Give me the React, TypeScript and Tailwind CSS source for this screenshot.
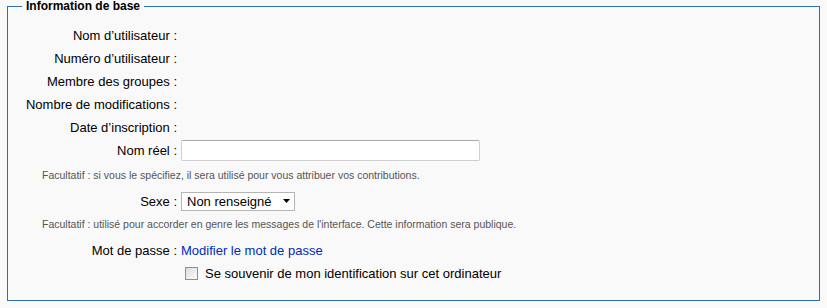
import { ChangeEvent, useState } from "react";

const infoRows = [
  "Nom d’utilisateur",
  "Numéro d’utilisateur",
  "Membre des groupes",
  "Nombre de modifications",
  "Date d’inscription",
];

function Label({ text }: { text: string }) {
  return <div className="w-[169px] shrink-0 text-right">{text} :</div>;
}

export default function App() {
  const [realName, setRealName] = useState("");
  const [gender, setGender] = useState("unknown");
  const [remember, setRemember] = useState(false);

  return (
    <div className="w-[827px] h-[308px] bg-[#f9f9f9] pl-[7px] font-['Liberation_Sans',Arial,sans-serif] text-[13px] text-black">
      <fieldset className="w-[813px] m-0 p-0 pb-[17px] border border-[#2f6fab]">
        <legend className="ml-[14px] px-1 text-[12px] leading-[13px] font-bold">
          Information de base
        </legend>

        <div className="pt-[11px] flex flex-col">
          {infoRows.map((row) => (
            <div key={row} className="flex items-center h-[23px]">
              <Label text={row} />
            </div>
          ))}

          <div className="flex items-center h-[23px]">
            <Label text="Nom réel" />
            <input
              type="text"
              value={realName}
              onChange={(e: ChangeEvent<HTMLInputElement>) =>
                setRealName(e.target.value)
              }
              className="ml-[4px] w-[299px] h-[21px] bg-white border border-[#cfcfcf] border-t-[#a9a9a9] rounded-[2px] px-1 text-[13px] outline-none"
            />
          </div>

          <div className="flex items-center h-[28px] pl-[34px] text-[10.5px] text-[#555]">
            Facultatif : si vous le spécifiez, il sera utilisé pour vous attribuer vos contributions.
          </div>

          <div className="flex items-center h-[23px]">
            <Label text="Sexe" />
            <div className="relative ml-[4px]">
              <select
                value={gender}
                onChange={(e: ChangeEvent<HTMLSelectElement>) =>
                  setGender(e.target.value)
                }
                className="appearance-none block w-[114px] h-[19px] bg-white border border-[#b5b5b5] pl-[5px] text-[13px] leading-[17px] outline-none"
              >
                <option value="unknown">Non renseigné</option>
                <option value="male">Masculin</option>
                <option value="female">Féminin</option>
              </select>
              <svg
                className="pointer-events-none absolute right-[5px] top-[7px]"
                width="7"
                height="4"
                viewBox="0 0 7 4"
              >
                <path d="M0 0h7L3.5 4z" fill="#000" />
              </svg>
            </div>
          </div>

          <div className="flex items-center h-[24px] pl-[34px] text-[10.5px] text-[#555]">
            Facultatif : utilisé pour accorder en genre les messages de l'interface. Cette information sera publique.
          </div>

          <div className="flex items-center h-[27px]">
            <Label text="Mot de passe" />
            <a href="#" className="ml-[4px] text-[#002bb8]">
              Modifier le mot de passe
            </a>
          </div>

          <label className="flex items-center h-[19px] pl-[173px] cursor-pointer">
            <input
              type="checkbox"
              checked={remember}
              onChange={(e) => setRemember(e.target.checked)}
              className="appearance-none ml-[4px] w-[13px] h-[13px] border border-[#8e8f8f] bg-gradient-to-br from-[#dcdcdc] to-[#fbfbfb] checked:bg-[#dfe9f5]"
            />
            <span className="ml-[7px]">
              Se souvenir de mon identification sur cet ordinateur
            </span>
          </label>
        </div>
      </fieldset>
    </div>
  );
}
